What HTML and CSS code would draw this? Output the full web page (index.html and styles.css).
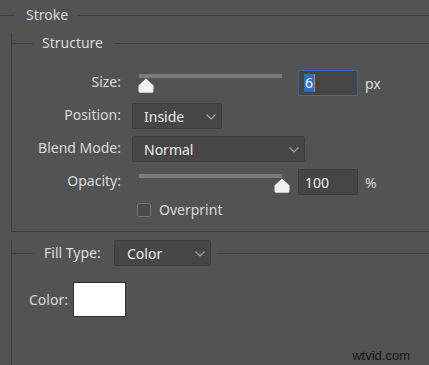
FILE: index.html
```html
<!DOCTYPE html>
<html>
<head>
<meta charset="utf-8">
<link rel="stylesheet" href="styles.css">
</head>
<body>
<div class="panel">
  <div class="legend stroke-head">
    <span class="rule rule-lead-stroke"></span>
    <span class="legend-text">Stroke</span>
    <span class="rule rule-fill"></span>
  </div>

  <div class="section structure">
    <div class="legend structure-head">
      <span class="rule rule-lead"></span>
      <span class="legend-text">Structure</span>
      <span class="rule rule-fill"></span>
    </div>

    <div class="rows">
      <div class="label">Size:</div>
      <div class="control">
        <div class="slider slider-size">
          <div class="track"></div>
          <svg class="thumb" style="margin-left:-1px" width="16" height="15" viewBox="0 0 16 15"><path d="M8 0.5 L15.5 7.5 V13 Q15.5 14.8 13.7 14.8 H2.3 Q0.5 14.8 0.5 13 V7.5 Z" fill="#f2f2f2"/></svg>
        </div>
        <div class="num num-active"><span class="sel">6</span><span class="caret"></span></div>
        <div class="unit">px</div>
      </div>

      <div class="label">Position:</div>
      <div class="control">
        <div class="select select-position"><span>Inside</span><svg class="chev" width="10" height="6" viewBox="0 0 10 6"><polyline points="0.5,0.5 5,5 9.5,0.5" fill="none" stroke="#a8a8a8" stroke-width="1.1"/></svg></div>
      </div>

      <div class="label">Blend Mode:</div>
      <div class="control">
        <div class="select select-blend"><span>Normal</span><svg class="chev" width="10" height="6" viewBox="0 0 10 6"><polyline points="0.5,0.5 5,5 9.5,0.5" fill="none" stroke="#a8a8a8" stroke-width="1.1"/></svg></div>
      </div>

      <div class="label">Opacity:</div>
      <div class="control">
        <div class="slider slider-opacity">
          <div class="track"></div>
          <svg class="thumb" style="margin-left:135px" width="16" height="15" viewBox="0 0 16 15"><path d="M8 0.5 L15.5 7.5 V13 Q15.5 14.8 13.7 14.8 H2.3 Q0.5 14.8 0.5 13 V7.5 Z" fill="#f2f2f2"/></svg>
        </div>
        <div class="num"><span>100</span></div>
        <div class="unit">%</div>
      </div>

      <div class="label"></div>
      <div class="control check-row">
        <span class="checkbox"></span>
        <span class="check-text">Overprint</span>
      </div>
    </div>
  </div>

  <div class="section fill">
    <div class="legend fill-head">
      <span class="rule rule-lead"></span>
      <span class="legend-text fill-label">Fill Type:</span>
      <div class="select select-fill"><span>Color</span><svg class="chev" width="10" height="6" viewBox="0 0 10 6"><polyline points="0.5,0.5 5,5 9.5,0.5" fill="none" stroke="#a8a8a8" stroke-width="1.1"/></svg></div>
      <span class="rule rule-fill rule-after"></span>
    </div>
    <div class="color-row">
      <span class="color-label">Color:</span>
      <span class="swatch"></span>
    </div>
  </div>

  <div class="watermark">wtvid.com</div>
</div>
</body>
</html>
```

FILE: styles.css
```css
* { box-sizing: border-box; }

html, body {
  margin: 0;
  padding: 0;
  background: #535353;
  height: 100%;
  overflow: hidden;
}

body {
  font-family: "Noto Sans", "Open Sans", sans-serif;
  font-size: 14px;
  color: #dadada;
}

.panel {
  position: relative;
  height: 365px;
  padding-top: 5px;
}

.legend {
  display: flex;
  align-items: center;
  height: 20px;
}

.rule {
  display: block;
  flex-shrink: 0;
  height: 1px;
  background: #3e3e3e;
}

.rule-lead-stroke { width: 15px; margin-right: 11px; }
.rule-lead { width: 21px; margin-right: 9px; }
.rule-fill { flex: 1 1 auto; }

.stroke-head .legend-text { margin-right: 10px; }
.structure-head .legend-text { margin-right: 12px; }

.legend-text {
  flex-shrink: 0;
  line-height: 20px;
  white-space: nowrap;
}

.section {
  margin-left: 11px;
  border-left: 1px solid #3e3e3e;
}

.structure {
  margin-top: 18px;
  border-bottom: 1px solid #3e3e3e;
  padding-bottom: 13px;
}

.structure-head { margin-top: -10px; }

.rows {
  margin-top: 17px;
  display: grid;
  grid-template-columns: 109px 1fr;
  grid-template-rows: 26px 26px 26px 26px 16px;
  column-gap: 11px;
  row-gap: 7px;
}

.label {
  text-align: right;
  line-height: 24px;
  white-space: nowrap;
}

.control {
  display: flex;
  align-items: center;
}

.slider {
  display: flex;
  flex-direction: column;
  align-self: stretch;
  margin-left: 7px;
  width: 143px;
}

.slider-size { padding-top: 4px; }
.slider-opacity { padding-top: 5px; }

.track {
  height: 4px;
  background: #7b7b7b;
}

.thumb { display: block; }

.num {
  margin-left: 16px;
  width: 60px;
  height: 26px;
  background: #454545;
  border: 1px solid #3c3c3c;
  display: flex;
  align-items: center;
  padding-left: 6px;
  color: #ececec;
}

.num-active {
  border-color: #3d6aa6;
}

.sel {
  background: #2f6cc2;
  color: #ffffff;
  line-height: 18px;
  padding: 0 1px;
  margin-left: -1px;
}

.caret {
  display: block;
  width: 1px;
  height: 18px;
  background: #c7874e;
}

.unit {
  margin-left: 7px;
}

.select {
  height: 26px;
  background: #464646;
  border: 1px solid #3d3d3d;
  border-radius: 2px;
  display: flex;
  align-items: center;
  justify-content: space-between;
  padding: 0 5px 0 11px;
  color: #ececec;
}

.chev { display: block; margin-top: 1px; }

.select-position { width: 90px; }
.select-blend { width: 173px; }

.check-row { padding-left: 5px; }

.checkbox {
  display: block;
  width: 14px;
  height: 14px;
  border: 1px solid #737373;
  border-radius: 2px;
  background: #4a4a4a;
}

.check-text {
  margin-left: 8px;
  line-height: 16px;
}

.fill {
  margin-top: 21px;
  height: 130px;
}

.fill-head {
  height: 26px;
  margin-top: -13px;
}

.fill-label { margin-left: 2px; margin-right: 0; width: 70px; }

.select-fill { width: 97px; padding-left: 12px; flex-shrink: 0; }

.rule-after { margin-left: 6px; }

.color-row {
  display: flex;
  align-items: center;
  margin-top: 16px;
  padding-left: 17px;
}

.color-label { margin-right: 5px; }

.swatch {
  display: block;
  width: 53px;
  height: 35px;
  background: #ffffff;
  border: 1px solid #2e2e2e;
}

.watermark {
  position: absolute;
  right: 19px;
  bottom: 2px;
  font-family: "Liberation Sans", Arial, sans-serif;
  font-size: 13px;
  color: #141414;
}
```
